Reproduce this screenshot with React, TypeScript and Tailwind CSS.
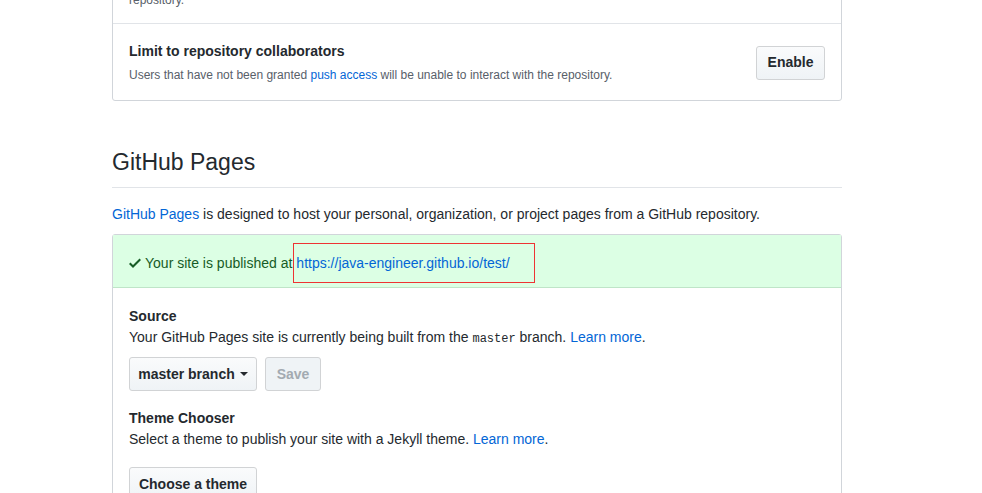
import React from 'react';

const font = { fontFamily: '"Liberation Sans", Arial, sans-serif' };

function Btn({ children, disabled = false, className = '' }: { children: React.ReactNode; disabled?: boolean; className?: string }) {
  return (
    <button
      className={
        'h-[34px] rounded-[3px] border border-[#d1d3d5] text-[14px] font-semibold bg-gradient-to-b from-[#fafbfc] to-[#eff3f6] ' +
        (disabled ? 'text-[#a3aab1] bg-none bg-[#eff3f6] ' : 'text-[#24292e] ') +
        className
      }
    >
      {children}
    </button>
  );
}

export default function App() {
  return (
    <div className="min-h-screen bg-white text-[#24292e]" style={font}>
      <div className="ml-[112px] w-[730px]">
        {/* collaborators box (top cut off) */}
        <div className="-mt-[36px] border border-[#d1d5da] rounded-[3px]">
          <div className="px-4 pt-[26px] pb-[14px] text-[12px] leading-[18px] text-[#586069]">
            <span>repository.</span>
          </div>
          <div className="flex items-center justify-between border-t border-[#e1e4e8] px-4 pt-[17px] pb-[16px]">
            <div>
              <div className="text-[14px] leading-[21px] font-semibold">Limit to repository collaborators</div>
              <div className="mt-1 text-[12px] leading-[18px] text-[#586069]">
                Users that have not been granted <a className="text-[#0366d6]">push access</a> will be unable to interact with the repository.
              </div>
            </div>
            <Btn className="w-[69px]">Enable</Btn>
          </div>
        </div>

        {/* GitHub Pages */}
        <h2 className="mt-[43px] pb-[7px] border-b border-[#e1e4e8] text-[23px] leading-[36px] font-normal">GitHub Pages</h2>
        <p className="mt-4 text-[14px] leading-[21px]">
          <a className="text-[#0366d6]">GitHub Pages</a> is designed to host your personal, organization, or project pages from a GitHub repository.
        </p>

        <div className="mt-[9px] border border-[#d1d5da] rounded-t-[3px]">
          <div className="flex items-center h-[53px] pt-[5px] pb-[1px] px-4 bg-[#dcffe4] border-b border-[#bfe5c8] text-[14px] text-[#165c26]">
            <svg width="12" height="16" viewBox="0 0 12 16" className="mr-1 fill-[#165c26]">
              <path fillRule="evenodd" d="M12 5l-8 8-4-4 1.5-1.5L4 10l6.5-6.5L12 5z" />
            </svg>
            <span>Your site is published at</span>
            <span className="inline-flex items-center h-[40px] w-[242px] ml-[1px] pl-[2px] border border-[#ee3333]">
              <a className="text-[#0366d6]">https://java-engineer.github.io/test/</a>
            </span>
          </div>

          <div className="px-4 pt-[18px] pb-8 text-[14px] leading-[21px]">
            <div className="font-semibold">Source</div>
            <div>
              Your GitHub Pages site is currently being built from the{' '}
              <code className="text-[12px]" style={{ fontFamily: '"Liberation Mono", monospace' }}>master</code> branch.{' '}
              <a className="text-[#0366d6]">Learn more</a>.
            </div>
            <div className="mt-[7px] flex gap-2">
              <Btn className="w-[128px] flex items-center justify-center gap-1">
                master branch
                <svg width="8" height="4" viewBox="0 0 8 4" className="ml-[1px] fill-[#24292e]">
                  <path d="M0 0h8L4 4z" />
                </svg>
              </Btn>
              <Btn disabled className="w-[56px]">Save</Btn>
            </div>

            <div className="mt-[17px] font-semibold">Theme Chooser</div>
            <div>
              Select a theme to publish your site with a Jekyll theme. <a className="text-[#0366d6]">Learn more</a>.
            </div>
            <div className="mt-[17px]">
              <Btn className="w-[128px]">Choose a theme</Btn>
            </div>
          </div>
        </div>
      </div>
    </div>
  );
}
